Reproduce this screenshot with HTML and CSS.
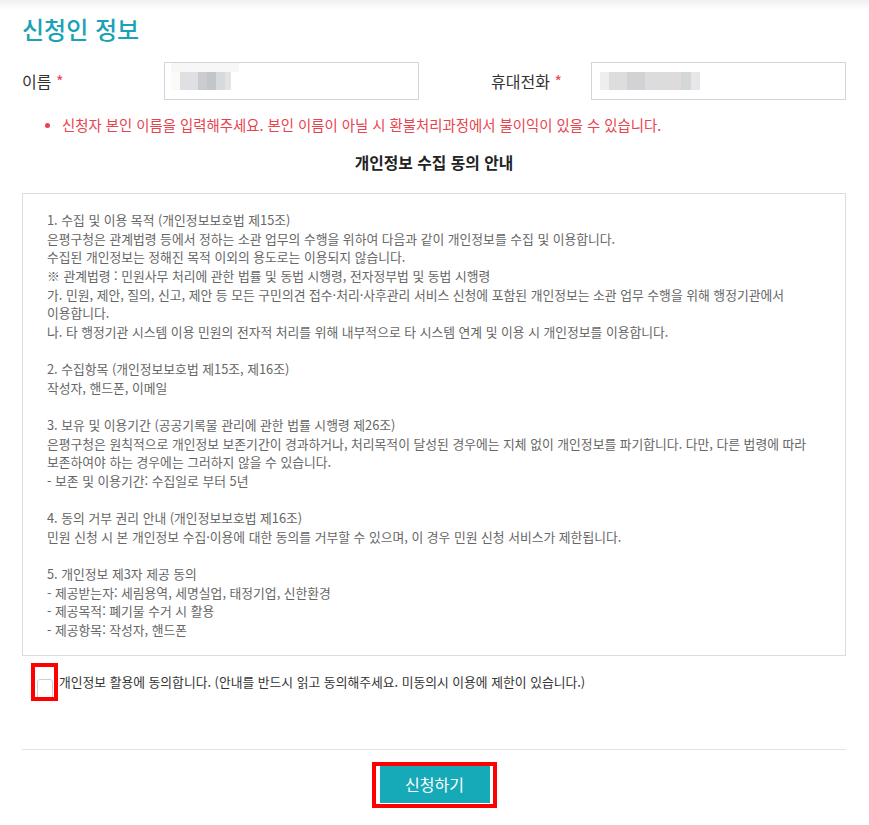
FILE: index.html
```
<!DOCTYPE html>
<html lang="ko">
<head>
    <meta charset="UTF-8">
    <meta name="viewport" content="width=device-width, initial-scale=1.0">
    <title>신청인 정보</title>
    <link rel="stylesheet" href="styles.css">
</head>
<body>
    <div class="top-shade"></div>

    <div class="wrap">
        <h2 class="title">신청인 정보</h2>

        <div class="form-row">
            <label class="field-label">이름 <span class="req">*</span></label>
            <div class="input-box">
                <span class="blur blur-name"></span>
            </div>
            <label class="field-label phone-label">휴대전화 <span class="req">*</span></label>
            <div class="input-box">
                <span class="blur blur-phone"></span>
            </div>
        </div>

        <ul class="notice">
            <li>신청자 본인 이름을 입력해주세요. 본인 이름이 아닐 시 환불처리과정에서 불이익이 있을 수 있습니다.</li>
        </ul>

        <h3 class="agree-title">개인정보 수집 동의 안내</h3>

        <div class="agree-box">
            1. 수집 및 이용 목적 (개인정보보호법 제15조)<br>
            은평구청은 관계법령 등에서 정하는 소관 업무의 수행을 위하여 다음과 같이 개인정보를 수집 및 이용합니다.<br>
            수집된 개인정보는 정해진 목적 이외의 용도로는 이용되지 않습니다.<br>
            ※ 관계법령 : 민원사무 처리에 관한 법률 및 동법 시행령, 전자정부법 및 동법 시행령<br>
            가. 민원, 제안, 질의, 신고, 제안 등 모든 구민의견 접수·처리·사후관리 서비스 신청에 포함된 개인정보는 소관 업무 수행을 위해 행정기관에서 이용합니다.<br>
            나. 타 행정기관 시스템 이용 민원의 전자적 처리를 위해 내부적으로 타 시스템 연계 및 이용 시 개인정보를 이용합니다.<br>
            <br>
            2. 수집항목 (개인정보보호법 제15조, 제16조)<br>
            작성자, 핸드폰, 이메일<br>
            <br>
            3. 보유 및 이용기간 (공공기록물 관리에 관한 법률 시행령 제26조)<br>
            은평구청은 원칙적으로 개인정보 보존기간이 경과하거나, 처리목적이 달성된 경우에는 지체 없이 개인정보를 파기합니다. 다만, 다른 법령에 따라 보존하여야 하는 경우에는 그러하지 않을 수 있습니다.<br>
            - 보존 및 이용기간: 수집일로 부터 5년<br>
            <br>
            4. 동의 거부 권리 안내 (개인정보보호법 제16조)<br>
            민원 신청 시 본 개인정보 수집·이용에 대한 동의를 거부할 수 있으며, 이 경우 민원 신청 서비스가 제한됩니다.<br>
            <br>
            5. 개인정보 제3자 제공 동의<br>
            - 제공받는자: 세림용역, 세명실업, 태정기업, 신한환경<br>
            - 제공목적: 폐기물 수거 시 활용<br>
            - 제공항목: 작성자, 핸드폰
        </div>

        <div class="check-row">
            <span class="check-mark"><span class="check-box"></span></span>
            <span class="check-text">개인정보 활용에 동의합니다. (안내를 반드시 읽고 동의해주세요. 미동의시 이용에 제한이 있습니다.)</span>
        </div>

        <div class="btn-area">
            <span class="btn-mark"><button class="btn-submit" type="button">신청하기</button></span>
        </div>
    </div>
</body>
</html>
```

FILE: styles.css
```
body {
    font-family: "Noto Sans CJK KR", "Noto Sans", sans-serif;
    background-color: #fff;
    color: #333;
    margin: 0;
    word-break: keep-all;
}
.top-shade {
    height: 10px;
    background: linear-gradient(#f0f0f0, #fff);
}
.wrap {
    padding: 0 23px 0 22px;
}
.title {
    color: #1aa3b6;
    font-size: 24px;
    font-weight: 500;
    line-height: 32px;
    margin: 3px 0 17px;
}
.form-row {
    display: grid;
    grid-template-columns: 142px 255px 172px 255px;
    align-items: center;
    height: 38px;
}
.field-label {
    font-size: 16px;
    color: #333;
}
.phone-label {
    padding-left: 72px;
}
.req {
    color: #e8434f;
}
.input-box {
    height: 36px;
    border: 1px solid #d3d5da;
    position: relative;
}
.blur {
    position: absolute;
    display: block;
}
.blur-name {
    left: 6px;
    top: 0;
    width: 68px;
    height: 28px;
    background:
        linear-gradient(90deg, #fbfaf7 0 9px, #dfe0e3 9px 27px, #cbccce 27px 36px, #c2c6c9 36px 45px, #d8d9dc 45px 54px, #e2e3e5 54px 60px, transparent 60px) 0 9px / 100% 18px no-repeat,
        linear-gradient(#f6f7f6, #f6f7f6) 0 0 / 100% 9px no-repeat;
}
.blur-phone {
    left: 8px;
    top: 9px;
    width: 110px;
    height: 18px;
    background: linear-gradient(90deg, #eeeeef 0 9px, #dddde0 9px 27px, #d2d2d5 27px 45px, #dcdcde 45px 63px, #dedbdc 63px 81px, #d3d7da 81px 91px, #e6e7e9 91px 100px, transparent 100px);
}
.notice {
    margin: 14px 0 0;
    padding-left: 40px;
    color: #e8434f;
    font-size: 14.4px;
    line-height: 22px;
}
.notice li::marker {
    font-size: 13px;
}
.agree-title {
    text-align: center;
    color: #222;
    font-size: 15.8px;
    font-weight: 700;
    line-height: 22px;
    margin: 16px 0 19px;
}
.agree-box {
    border: 1px solid #dcdcdc;
    padding: 17px 24px 15px;
    color: #666;
    font-size: 12.8px;
    line-height: 18.64px;
}
.check-row {
    display: flex;
    align-items: center;
    padding-left: 9px;
    margin-top: 7px;
    height: 38px;
}
.check-mark {
    display: flex;
    align-items: flex-end;
    justify-content: center;
    width: 19px;
    height: 30px;
    border: 4px solid #ff0000;
    overflow: hidden;
}
.check-box {
    display: block;
    width: 14px;
    height: 18px;
    border: 1px solid #cfcfcf;
    border-radius: 3px;
    background: #fff;
    margin-bottom: -2px;
}
.check-text {
    font-size: 12.8px;
    color: #333;
    margin-left: 1px;
}
.btn-area {
    margin-top: 48px;
    border-top: 1px solid #e3e3e3;
    padding-top: 12px;
    text-align: center;
}
.btn-mark {
    display: inline-block;
    border: 4px solid #ff0000;
    padding: 0 3px 1px 4px;
}
.btn-submit {
    display: block;
    width: 110px;
    height: 37px;
    border: 0;
    background-color: #16a9b8;
    color: #fff;
    font-family: inherit;
    font-size: 16px;
}
```
